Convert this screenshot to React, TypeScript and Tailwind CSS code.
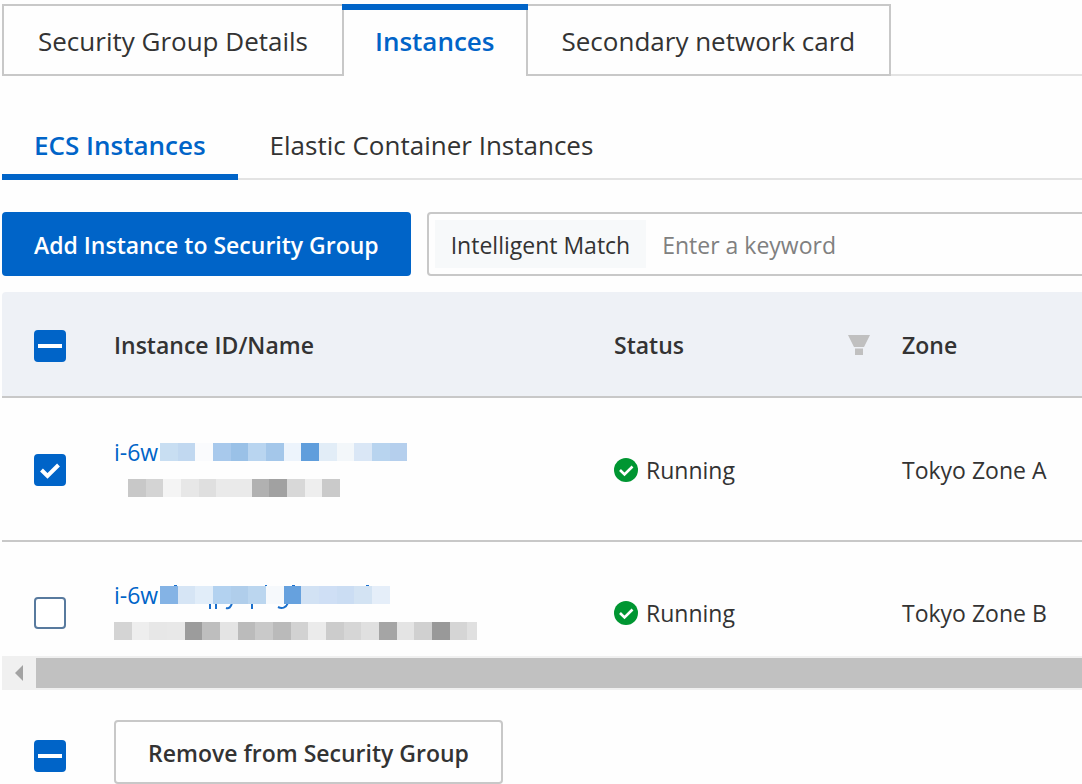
import { useEffect, useRef, useState } from "react";
import clsx from "clsx";

interface Instance {
  id: string;
  zone: string;
  idMask: string[];
  nameMask: string[];
  nameIndent: boolean;
  hasTails: boolean;
}

const instances: Instance[] = [
  {
    id: "i-6w",
    zone: "Tokyo Zone A",
    idMask: [
      "#c8def2", "#c1d8f0", "#fafbfd", "#a8c9ec", "#9ac1e7", "#b9d5f0", "#a4c7ea",
      "#edf4fc", "#609edc", "#e2edf7", "#f3f7fa", "#dae7f6", "#b8d4ef", "#b5cfed",
    ],
    nameMask: [
      "#c8c8c8", "#d4d4d4", "#f4f4f4", "#e7e7e7", "#dfdfdf", "#eaeaea",
      "#eaeaea", "#b1b1b1", "#a1a1a1", "#d8d8d8", "#eeeeee", "#cacaca",
    ],
    nameIndent: true,
    hasTails: false,
  },
  {
    id: "i-6w",
    zone: "Tokyo Zone B",
    idMask: [
      "#84b3e5", "#d6e5f5", "#e1edf9", "#b3d2f0", "#b0ceeb", "#bbd6ef", "#f6f9fc",
      "#66a1de", "#d2e2f4", "#cfdff5", "#cbddf3", "#d3e3f3", "#e5eef9",
    ],
    nameMask: [
      "#d4d4d4", "#eeeeee", "#e7e7e7", "#e8e8e8", "#9c9c9c", "#bebebe", "#e4e4e4",
      "#bbbbbb", "#c9c9c9", "#bababa", "#d2d2d2", "#ebebeb", "#cccccc", "#d6d6d6",
      "#e0e0e0", "#a5a5a5", "#e4e4e4", "#d0d0d0", "#999999", "#d5d5d5", "#e0e0e0",
    ],
    nameIndent: false,
    hasTails: true,
  },
];

// Mosaic that hides the private part of an ID or a name
function Mosaic({ colors, tails = false, cut = 0 }: { colors: string[]; tails?: boolean; cut?: number }) {
  const width = Math.round((colors.length * 53) / 3) - cut;
  return (
    <svg width={width} height="18" viewBox={`0 0 ${width} 18`} className="shrink-0 overflow-visible" aria-hidden="true">
      {tails && (
        <g fill="none" stroke="#1a6fcc" strokeWidth="2">
          <path d="M14 0h3M105 0h2M132 0h3M206 0h3" />
          <path d="M50 17v6M56 17v6M92 17v6" />
          <path d="M66 22c3 1 5-1 6-5M118 21c4 2 8 1 10-4" />
        </g>
      )}
      {colors.map((color, i) => {
        const x = Math.round((i * 53) / 3);
        const end = Math.min(Math.round(((i + 1) * 53) / 3), width);
        return <rect key={i} x={x} y="0" width={end - x} height="18" fill={color} shapeRendering="crispEdges" />;
      })}
    </svg>
  );
}

interface CheckboxProps {
  label: string;
  checked: boolean;
  mixed?: boolean;
  onChange: () => void;
}

function Checkbox({ label, checked, mixed = false, onChange }: CheckboxProps) {
  const ref = useRef<HTMLInputElement>(null);

  useEffect(() => {
    if (ref.current) ref.current.indeterminate = mixed;
  }, [mixed]);

  return (
    <label className="relative block size-8">
      <input
        ref={ref}
        type="checkbox"
        aria-label={label}
        checked={checked}
        onChange={onChange}
        className={clsx(
          "block size-8 appearance-none rounded border-2",
          checked || mixed ? "border-[#0064c8] bg-[#0064c8]" : "border-[#587a9e] bg-white"
        )}
      />
      <svg viewBox="0 0 32 32" className="pointer-events-none absolute inset-0 size-8" aria-hidden="true">
        {mixed && <path d="M4 14h24v4H4z" fill="#fff" />}
        {checked && !mixed && <path d="M7.5 16l6 6L24.5 11" fill="none" stroke="#fff" strokeWidth="4" />}
      </svg>
    </label>
  );
}

export default function App() {
  const [tab, setTab] = useState("Instances");
  const [subTab, setSubTab] = useState("ECS Instances");
  const [keyword, setKeyword] = useState("");
  const [selected, setSelected] = useState([true, false]);

  const all = selected.every(Boolean);
  const some = selected.some(Boolean) && !all;

  const toggle = (index: number) => setSelected(selected.map((s, i) => (i === index ? !s : s)));
  const toggleAll = () => setSelected(selected.map(() => !all));

  return (
    <main className="overflow-hidden bg-[#fefefe] pt-1 pl-0.5 font-['Open_Sans','Noto_Sans',sans-serif] text-[23px] leading-9 text-[#333]">
      <div role="tablist" className="flex text-[26px] whitespace-nowrap">
        {["Security Group Details", "Instances", "Secondary network card"].map((name) => (
          <button
            key={name}
            role="tab"
            aria-selected={tab === name}
            onClick={() => setTab(name)}
            className={clsx(
              "h-[72px] shrink-0",
              tab === name
                ? "z-10 -mx-0.5 border-t-[6px] border-[#0064c8] px-[33px] pb-1 font-semibold text-[#0064c8]"
                : "border-2 border-[#c8c8c8] px-[34px] pt-0.5"
            )}
          >
            {name}
          </button>
        ))}
        <div className="flex-1 border-b-2 border-[#e3e3e3]" />
      </div>

      <div role="tablist" className="mt-8 flex border-b-2 border-[#e3e3e3] text-[26px] whitespace-nowrap">
        {["ECS Instances", "Elastic Container Instances"].map((name) => (
          <button
            key={name}
            role="tab"
            aria-selected={subTab === name}
            onClick={() => setSubTab(name)}
            className={clsx(
              "-mb-0.5 h-[72px] border-b-[6px] px-8 pt-2",
              subTab === name ? "border-[#0064c8] font-semibold text-[#0064c8]" : "border-transparent"
            )}
          >
            {name}
          </button>
        ))}
      </div>

      <div className="mt-8 flex gap-4 whitespace-nowrap">
        <button className="h-16 shrink-0 rounded bg-[#0064c8] px-8 pt-0.5 font-semibold text-white">
          Add Instance to Security Group
        </button>
        <div className="-mr-2 flex h-16 flex-1 items-center rounded border-2 border-[#c8c8c8] px-1.5">
          <label htmlFor="keyword" className="h-12 bg-[#f7f9fa] px-4 pt-[7px]">
            Intelligent Match
          </label>
          <input
            id="keyword"
            value={keyword}
            onChange={(e) => setKeyword(e.target.value)}
            placeholder="Enter a keyword"
            className="h-12 min-w-0 flex-1 px-4 pt-0.5 outline-none placeholder:text-[#808080]"
          />
        </div>
      </div>

      <table className="mt-4 w-full table-fixed text-left whitespace-nowrap">
        <thead>
          <tr className="border-b-2 border-[#c8c8c8] bg-[#eef1f6]">
            <th className="w-20 rounded-tl pt-1 pl-8">
              <Checkbox label="Select all" checked={all} mixed={some} onChange={toggleAll} />
            </th>
            <th className="w-[500px] pt-[35px] pb-[33px] pl-8 font-semibold">Instance ID/Name</th>
            <th className="w-72 pt-[35px] pb-[33px] pl-8 font-semibold">
              <div className="flex items-center justify-between">
                Status
                <button aria-label="Filter by status">
                  <svg width="22" height="20" viewBox="0 0 22 20" fill="#c0c0c0" aria-hidden="true">
                    <path d="M0 0h22l-6 12H6zM7 13.5h8V20H7z" />
                  </svg>
                </button>
              </div>
            </th>
            <th className="pt-[35px] pb-[33px] pl-8 font-semibold">Zone</th>
          </tr>
        </thead>
        <tbody>
          {instances.map((instance, i) => {
            const pad = i === instances.length - 1 ? "pt-[35px] pb-[7px]" : "border-b-2 border-[#c8c8c8] pt-9 pb-[34px]";
            return (
              <tr key={instance.zone}>
                <td className={clsx("pl-8", pad)}>
                  <Checkbox label={`Select ${instance.zone}`} checked={selected[i]} onChange={() => toggle(i)} />
                </td>
                <td className={clsx("pl-8", pad)}>
                  <div className="flex h-9 items-center">
                    <a href="#instance" className="w-[46px] text-[#0064c8]">
                      {instance.id}
                    </a>
                    <Mosaic colors={instance.idMask} tails={instance.hasTails} />
                  </div>
                  <div className={clsx("flex h-9 items-center", instance.nameIndent && "pl-3.5")}>
                    <Mosaic colors={instance.nameMask} cut={instance.nameIndent ? 0 : 8} />
                  </div>
                </td>
                <td className={clsx("pl-8", pad)}>
                  <div className="flex items-center gap-2">
                    <svg width="24" height="24" viewBox="0 0 24 24" aria-hidden="true">
                      <circle cx="12" cy="12" r="12" fill="#009632" />
                      <path d="M6 12l4.5 4.5 8-8" fill="none" stroke="#fff" strokeWidth="2.6" />
                    </svg>
                    Running
                  </div>
                </td>
                <td className={clsx("pl-8", pad)}>{instance.zone}</td>
              </tr>
            );
          })}
        </tbody>
      </table>

      <div className="flex h-[34px] bg-[#f0f0f0] py-0.5">
        <button aria-label="Scroll left" className="w-[34px] pl-[13px]">
          <svg width="8" height="16" viewBox="0 0 8 16" fill="#a3a3a3" aria-hidden="true">
            <path d="M8 0v16L0 8z" />
          </svg>
        </button>
        <div className="flex-1 bg-[#c1c1c1]" />
      </div>

      <div className="mt-[30px] flex items-center gap-12 pl-8">
        <div className="pt-2">
          <Checkbox label="Select all instances" checked={all} mixed={some} onChange={toggleAll} />
        </div>
        <button className="h-16 rounded border-2 border-[#c8c8c8] px-8 pt-0.5 font-semibold">
          Remove from Security Group
        </button>
      </div>
    </main>
  );
}
